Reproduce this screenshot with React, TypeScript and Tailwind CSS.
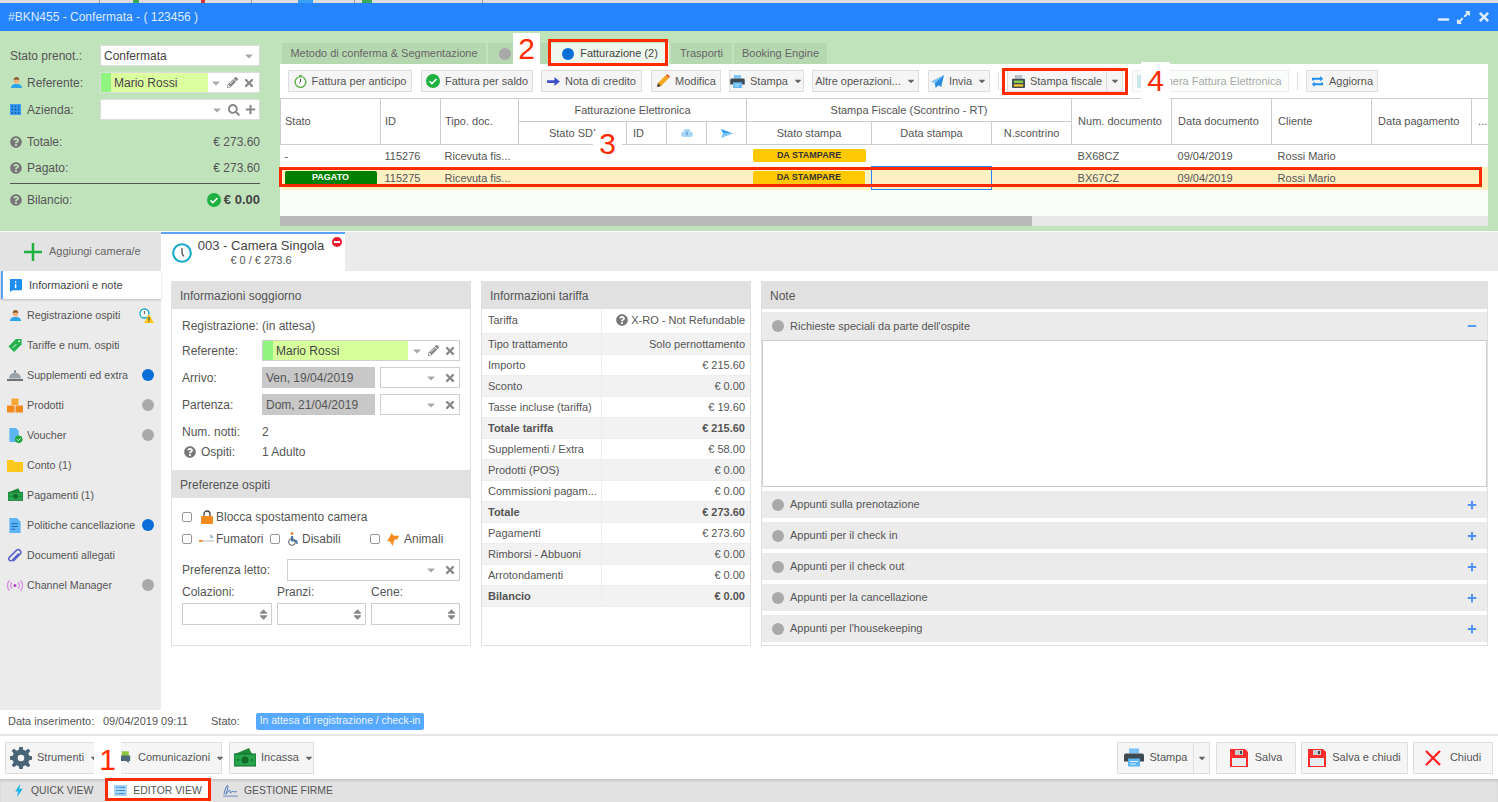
import type { ReactNode } from "react";
import { FaCaretDown, FaExpandAlt, FaMinus, FaPencilAlt, FaPlus, FaQuestionCircle, FaSearch, FaSort, FaTimes } from "react-icons/fa";

const Help = () => <FaQuestionCircle className="w-[12px] h-[12px] text-[#777] shrink-0" />;
const Dot = ({ color }: { color: "blue" | "gray" }) => (
  <span className={color === "blue" ? "block w-[12px] h-[12px] rounded-full bg-[#0a6ed8] shrink-0" : "block w-[12px] h-[12px] rounded-full bg-[#a9a9a9] shrink-0"} />
);
const Caret = () => <FaCaretDown className="w-[10px] h-[10px] text-[#666] shrink-0" />;
const FieldCaret = () => <FaCaretDown className="w-[12px] h-[12px] text-[#aaa] shrink-0" />;
const FieldX = () => <FaTimes className="w-[12px] h-[12px] text-[#888] shrink-0" />;
const FieldPen = () => <FaPencilAlt className="w-[11px] h-[11px] text-[#888] shrink-0" />;

function PersonIcon() {
  return (
    <svg viewBox="0 0 14 14" className="w-[13px] h-[13px] shrink-0">
      <path d="M1 13c0-3 2-4 4-4.500h4c2 .5 4 1.500 4 4.500z" fill="#2ba5e8" />
      <circle cx="7" cy="5" r="3" fill="#f0b27a" />
      <path d="M4 4.500C4 2 5.500 1 7 1s3 1 3 3.500C8.500 3.500 6 3.500 4 4.500z" fill="#8a5a2b" />
    </svg>
  );
}
function GridIcon() {
  return (
    <svg viewBox="0 0 12 12" className="w-[11px] h-[11px] shrink-0">
      <rect width="12" height="12" fill="#3aa0f5" />
      <path d="M1.500 1.500h2v2h-2zM5 1.500h2v2H5zM8.500 1.500h2v2h-2zM1.500 5h2v2h-2zM5 5h2v2H5zM8.500 5h2v2h-2zM1.500 8.500h2v2h-2zM5 8.500h2v2H5zM8.500 8.500h2v2h-2z" fill="#155fa8" />
    </svg>
  );
}
function CheckCircle() {
  return (
    <svg viewBox="0 0 14 14" className="w-[14px] h-[14px] shrink-0">
      <circle cx="7" cy="7" r="7" fill="#1fb141" />
      <path d="M3.500 7.300l2.400 2.300 4.600-4.700" fill="none" stroke="#fff" strokeWidth="1.500" />
    </svg>
  );
}
function PrinterIcon({ big }: { big?: boolean }) {
  return (
    <svg viewBox="0 0 20 18" className={big ? "w-[20px] h-[19px] shrink-0" : "w-[15px] h-[13px] shrink-0"}>
      <rect x="5" y="0" width="10" height="5" fill="#7cc4f7" />
      <path d="M2 5h16a2 2 0 0 1 2 2v6h-4v-2H4v2H0V7a2 2 0 0 1 2-2z" fill="#3f4a52" />
      <rect x="4" y="10" width="12" height="8" fill="#5db5f5" />
      <path d="M6 13h8M6 15.500h6" stroke="#fff" strokeWidth="0.800" />
    </svg>
  );
}
function FiscalIcon() {
  return (
    <svg viewBox="0 0 14 14" className="w-[13px] h-[13px] shrink-0">
      <rect x="3" y="0" width="8" height="4" fill="#b9c2c8" />
      <rect x="0" y="4" width="14" height="10" rx="1" fill="#3f4a52" />
      <rect x="2" y="6" width="10" height="2.500" fill="#8fd14f" />
      <rect x="2" y="10" width="10" height="2.500" fill="#f4c430" />
    </svg>
  );
}
function FloppyIcon() {
  return (
    <svg viewBox="0 0 18 18" className="w-[18px] h-[18px] shrink-0">
      <path d="M0 0h15l3 3v15H0z" fill="#ff2b2b" />
      <rect x="5" y="1" width="8" height="5" fill="#c9ced3" />
      <rect x="10" y="2" width="2" height="3" fill="#444" />
      <rect x="2" y="9" width="14" height="8" fill="#e6edf3" />
    </svg>
  );
}
function CashIcon({ size }: { size: "sm" | "lg" }) {
  return (
    <svg viewBox="0 0 22 20" className={size === "sm" ? "w-[15px] h-[14px] shrink-0" : "w-[22px] h-[20px] shrink-0"}>
      <path d="M1 6L15 0l3 6z" fill="#1f8a3a" />
      <rect x="0" y="6" width="22" height="12" fill="#26a44b" stroke="#0f6a2a" strokeWidth="1" />
      <ellipse cx="11" cy="12" rx="3.500" ry="3.500" fill="#0f6a2a" />
      <circle cx="4" cy="12" r="1" fill="#0f6a2a" />
      <circle cx="18" cy="12" r="1" fill="#0f6a2a" />
    </svg>
  );
}

function SideIcon({ name }: { name: string }) {
  const cls = "w-[16px] h-[15px] shrink-0";
  if (name === "person") return <PersonIcon />;
  if (name === "tag")
    return (
      <svg viewBox="0 0 16 16" className={cls}>
        <path d="M9 1h6v6l-8 8-6-6z" fill="#22b14c" />
        <circle cx="12.500" cy="3.500" r="1" fill="#fff" />
        <path d="M5.500 10.500l4-4" stroke="#fff" strokeWidth="1" />
      </svg>
    );
  if (name === "bell")
    return (
      <svg viewBox="0 0 16 14" className={cls}>
        <path d="M2 10a6 6 0 0 1 12 0z" fill="#9aa3aa" />
        <rect x="7" y="2" width="2" height="2" fill="#6d757b" />
        <rect x="0" y="10.500" width="16" height="2" fill="#6d757b" />
      </svg>
    );
  if (name === "boxes")
    return (
      <svg viewBox="0 0 16 14" className={cls}>
        <rect x="4.500" y="0" width="7" height="6.500" fill="#f7a733" />
        <rect x="0" y="7" width="7.500" height="7" fill="#f58a1f" />
        <rect x="8.500" y="7" width="7.500" height="7" fill="#f58a1f" />
      </svg>
    );
  if (name === "voucher")
    return (
      <svg viewBox="0 0 16 16" className={cls}>
        <path d="M2 0h7l3 3v12H2z" fill="#5db5f5" />
        <circle cx="12" cy="12" r="4" fill="#1fa83f" />
        <path d="M10 12l1.500 1.500L14 11" stroke="#fff" fill="none" strokeWidth="1" />
      </svg>
    );
  if (name === "folder")
    return (
      <svg viewBox="0 0 16 13" className={cls}>
        <path d="M0 1h6l2 2h8v10H0z" fill="#ffc81e" />
      </svg>
    );
  if (name === "cash") return <CashIcon size="sm" />;
  if (name === "doc")
    return (
      <svg viewBox="0 0 14 16" className={cls}>
        <path d="M1 0h8l4 4v12H1z" fill="#5db5f5" />
        <path d="M3 6h7M3 9h7M3 12h4" stroke="#1566b5" strokeWidth="1" />
      </svg>
    );
  if (name === "clip")
    return (
      <svg viewBox="0 0 16 16" className={cls}>
        <path d="M13 5l-7 7a2 2 0 0 1-3-3l8-8a3 3 0 0 1 4 4l-8 8" transform="translate(-1 1)" fill="none" stroke="#5560c8" strokeWidth="1.600" />
      </svg>
    );
  return (
    <svg viewBox="0 0 16 14" className={cls}>
      <circle cx="8" cy="7" r="1.500" fill="#b23fc4" />
      <path d="M5 4a4 4 0 0 0 0 6M11 4a4 4 0 0 1 0 6M2.500 2a7 7 0 0 0 0 10M13.500 2a7 7 0 0 1 0 10" fill="none" stroke="#d58ae0" strokeWidth="1.200" />
    </svg>
  );
}

const sideItems = [
  { icon: "person", label: "Registrazione ospiti", mark: "warn" },
  { icon: "tag", label: "Tariffe e num. ospiti" },
  { icon: "bell", label: "Supplementi ed extra", mark: "blue" },
  { icon: "boxes", label: "Prodotti", mark: "gray" },
  { icon: "voucher", label: "Voucher", mark: "gray" },
  { icon: "folder", label: "Conto (1)" },
  { icon: "cash", label: "Pagamenti (1)" },
  { icon: "doc", label: "Politiche cancellazione", mark: "blue" },
  { icon: "clip", label: "Documenti allegati" },
  { icon: "radio", label: "Channel Manager", mark: "gray" },
];

const tariffRows = [
  { l: "Tipo trattamento", v: "Solo pernottamento" },
  { l: "Importo", v: "€ 215.60" },
  { l: "Sconto", v: "€ 0.00" },
  { l: "Tasse incluse (tariffa)", v: "€ 19.60" },
  { l: "Totale tariffa", v: "€ 215.60", b: true },
  { l: "Supplementi / Extra", v: "€ 58.00" },
  { l: "Prodotti (POS)", v: "€ 0.00" },
  { l: "Commissioni pagam...", v: "€ 0.00" },
  { l: "Totale", v: "€ 273.60", b: true },
  { l: "Pagamenti", v: "€ 273.60" },
  { l: "Rimborsi - Abbuoni", v: "€ 0.00" },
  { l: "Arrotondamenti", v: "€ 0.00" },
  { l: "Bilancio", v: "€ 0.00", b: true },
];

const noteRows = ["Appunti sulla prenotazione", "Appunti per il check in", "Appunti per il check out", "Appunti per la cancellazione", "Appunti per l'housekeeping"];

function ToolBtn({ className, children }: { className: string; children: ReactNode }) {
  return <div className={`h-[22px] flex items-center justify-center gap-[5px] bg-[#f5f5f5] border border-[#dddddd] shrink-0 whitespace-nowrap ${className}`}>{children}</div>;
}

function BigBtn({ className, children }: { className: string; children: ReactNode }) {
  return <div className={`h-[32px] flex items-center justify-center gap-[6px] bg-[#f5f5f5] border border-[#dedede] shrink-0 whitespace-nowrap ${className}`}>{children}</div>;
}

function PanelTitle({ children }: { children: ReactNode }) {
  return <div className="h-[28px] flex items-center px-[8px] pt-[2px] bg-[#e1e1e1] text-[12px] text-[#555] shrink-0">{children}</div>;
}

function Check() {
  return <span className="block w-[10px] h-[10px] rounded-[2px] border border-[#999] bg-white shrink-0" />;
}

function Spin({ className }: { className: string }) {
  return (
    <div className={`h-[22px] border border-[#cfcfcf] flex items-center justify-end pr-[3px] ${className}`}>
      <FaSort className="w-[9px] h-[13px] text-[#888]" />
    </div>
  );
}

function SmallTime() {
  return (
    <div className="w-[80px] h-[21px] ml-[5px] border border-[#cfcfcf] flex items-center justify-end gap-[7px] pr-[3px]">
      <FieldCaret />
      <FieldX />
    </div>
  );
}

const thBase = "border border-[#cccccc] font-normal text-[11px] text-[#555] text-left whitespace-nowrap";
const thL = `${thBase} px-[4px]`;
const thR = `${thBase} px-[6px]`;
const thCenter = "border border-[#cccccc] font-normal text-[11px] text-[#555] text-center whitespace-nowrap";
const tdL = "px-[4px] text-[11px] text-[#555] whitespace-nowrap overflow-hidden";
const tdR = "px-[6px] text-[11px] text-[#555] whitespace-nowrap overflow-hidden";

export default function App() {
  return (
    <div className="relative w-[1498px] h-[802px] overflow-hidden flex flex-col bg-white text-[11px] text-[#555] [font-family:'Liberation_Sans',sans-serif]">
      {/* page behind the window */}
      <div className="h-[3px] bg-[#dddddd] flex shrink-0">
        <div className="w-[100px] border-r border-[#999]" />
        <div className="w-[33px]" />
        <div className="w-[6px] bg-[#39a85a]" />
        <div className="w-[62px]" />
        <div className="w-[4px] bg-[#d33]" />
        <div className="w-[47px] border-r border-[#999]" />
        <div className="w-[46px]" />
        <div className="w-[15px] bg-[#3aa0f5]" />
        <div className="w-[42px] border-r border-[#999]" />
        <div className="w-[7px]" />
        <div className="w-[10px] bg-[#39a85a]" />
        <div className="w-[111px] border-r border-[#999]" />
      </div>

      {/* title bar */}
      <div className="h-[28px] bg-[#2684ff] flex items-center justify-between pl-[8px] pr-[7px] shrink-0">
        <span className="text-[12px] text-[#dcebff]">#BKN455 - Confermata - ( 123456 )</span>
        <div className="flex items-center gap-[6px] text-[#dcebff]">
          <FaMinus className="w-[13px] h-[13px] mt-[4px]" />
          <FaExpandAlt className="w-[15px] h-[15px]" />
          <FaTimes className="w-[14px] h-[14px]" />
        </div>
      </div>

      {/* booking summary */}
      <div className="h-[200px] bg-[#c1e3bc] flex shrink-0">
        <div className="w-[250px] ml-[10px] mt-[14px] text-[12px] shrink-0">
          <div className="flex items-center h-[21px]">
            <span className="w-[90px] shrink-0">Stato prenot.:</span>
            <div className="w-[160px] h-[21px] bg-white border border-[#dddddd] flex items-center justify-between pl-[3px] pr-[4px] text-[#444]">
              Confermata
              <FieldCaret />
            </div>
          </div>
          <div className="flex items-center h-[21px] mt-[6px]">
            <div className="w-[90px] flex items-center gap-[4px] shrink-0">
              <PersonIcon />
              Referente:
            </div>
            <div className="w-[160px] h-[21px] bg-white border border-[#dddddd] flex items-center">
              <span className="w-[10px] h-full bg-[#90f57e]" />
              <span className="w-[97px] h-full bg-[#dcff9f] flex items-center pl-[3px] text-[#444]">Mario Rossi</span>
              <div className="flex items-center gap-[5px] pl-[2px]">
                <FieldCaret />
                <FieldPen />
                <FieldX />
              </div>
            </div>
          </div>
          <div className="flex items-center h-[21px] mt-[6px]">
            <div className="w-[90px] flex items-center gap-[6px] shrink-0">
              <GridIcon />
              Azienda:
            </div>
            <div className="w-[160px] h-[21px] bg-white border border-[#dddddd] flex items-center justify-end gap-[5px] pr-[3px]">
              <FieldCaret />
              <FaSearch className="w-[12px] h-[12px] text-[#888]" />
              <FaPlus className="w-[11px] h-[11px] text-[#888]" />
            </div>
          </div>
          <div className="flex items-center justify-between mt-[12px] h-[20px]">
            <div className="flex items-center gap-[5px]">
              <Help />
              Totale:
            </div>
            € 273.60
          </div>
          <div className="flex items-center justify-between mt-[6px] h-[20px] pb-0">
            <div className="flex items-center gap-[5px]">
              <Help />
              Pagato:
            </div>
            € 273.60
          </div>
          <div className="h-px bg-[#555] mt-[5px]" />
          <div className="flex items-center justify-between mt-[6px] h-[20px]">
            <div className="flex items-center gap-[5px]">
              <Help />
              Bilancio:
            </div>
            <div className="flex items-center gap-[3px] font-bold text-[#444] text-[13px]">
              <CheckCircle />
              € 0.00
            </div>
          </div>
        </div>

        <div className="ml-[20px] w-[1208px] flex flex-col shrink-0">
          <div className="h-[33px] pt-[12px] flex items-stretch gap-[2px] pl-[2px] shrink-0 text-[#666]">
            <div className="w-[204px] bg-[#b6d8b1] flex items-center justify-center">Metodo di conferma &amp; Segmentazione</div>
            <div className="w-[61px] bg-[#b6d8b1] flex items-center pl-[11px]">
              <Dot color="gray" />
            </div>
            <div className="w-[118px] bg-[#eef7ec] flex items-center justify-center gap-[6px] text-[#444]">
              <Dot color="blue" />
              Fatturazione (2)
            </div>
            <div className="w-[61px] bg-[#b6d8b1] flex items-center justify-center">Trasporti</div>
            <div className="w-[93px] bg-[#b6d8b1] flex items-center justify-center">Booking Engine</div>
          </div>
          <div className="h-[162px] bg-white flex flex-col shrink-0">
            <div className="h-[34px] flex items-center pl-[8px] shrink-0">
              <ToolBtn className="w-[124px]">
                <svg viewBox="0 0 14 14" className="w-[13px] h-[13px] shrink-0">
                  <circle cx="7" cy="7.500" r="5.800" fill="#fff" stroke="#5bb04a" strokeWidth="1.500" />
                  <path d="M7 4v3.500l-1.500 1.500" fill="none" stroke="#444" strokeWidth="1" />
                  <rect x="5.500" y="0" width="3" height="1.500" fill="#5bb04a" />
                </svg>
                Fattura per anticipo
              </ToolBtn>
              <ToolBtn className="w-[112px] ml-[9px]">
                <CheckCircle />
                Fattura per saldo
              </ToolBtn>
              <ToolBtn className="w-[101px] ml-[8px]">
                <svg viewBox="0 0 14 12" className="w-[13px] h-[11px] shrink-0">
                  <path d="M0 4.500h8V1l6 5-6 5V7.500H0z" fill="#4052c8" />
                </svg>
                Nota di credito
              </ToolBtn>
              <ToolBtn className="w-[70px] ml-[9px]">
                <svg viewBox="0 0 14 14" className="w-[14px] h-[14px] shrink-0">
                  <path d="M1 13l1-4 8-8 3 3-8 8z" fill="#f5a623" />
                  <path d="M10 1l3 3 1-1.500L11.500 0z" fill="#e0562b" />
                  <path d="M1 13l1-4 3 3z" fill="#444" />
                </svg>
                Modifica
              </ToolBtn>
              <ToolBtn className="w-[75px] ml-[8px]">
                <PrinterIcon />
                Stampa
                <Caret />
              </ToolBtn>
              <ToolBtn className="w-[107px] ml-[8px]">
                Altre operazioni...
                <Caret />
              </ToolBtn>
              <ToolBtn className="w-[62px] ml-[9px]">
                <svg viewBox="0 0 14 14" className="w-[13px] h-[13px] shrink-0">
                  <path d="M14 0L0 7l4 2z" fill="#7cc4f7" />
                  <path d="M14 0L4 9l1 5 3-3 3 2z" fill="#2c8ee0" />
                </svg>
                Invia
                <Caret />
              </ToolBtn>
              <div className="w-px h-[18px] bg-[#dddddd] ml-[8px]" />
              <ToolBtn className="w-[116px] ml-[8px] !justify-start !gap-0">
                <span className="w-[98px] flex items-center justify-center gap-[5px] h-full">
                  <FiscalIcon />
                  Stampa fiscale
                </span>
                <span className="flex-1 h-full border-l border-[#dddddd] flex items-center justify-center">
                  <Caret />
                </span>
              </ToolBtn>
              <div className="w-[157px] h-[22px] ml-[9px] flex items-center pl-[4px] gap-[5px] bg-[#fbfdfb] border border-[#eeeeee] text-[#aaa] whitespace-nowrap">
                <span className="w-[10px] h-[13px] bg-[#cde6ea] shrink-0" />
                <span>Genera Fattura Elettronica</span>
              </div>
              <div className="w-px h-[18px] bg-[#dddddd] ml-[8px]" />
              <ToolBtn className="w-[72px] ml-[8px]">
                <svg viewBox="0 0 14 14" className="w-[13px] h-[13px] shrink-0">
                  <path d="M1 6V3h9V1l3 3-3 3V5H3v1zM13 8v3H4v2l-3-3 3-3v2h7V8z" fill="#1f8ef1" />
                </svg>
                Aggiorna
              </ToolBtn>
            </div>

            <div className="h-[118px] bg-[#fafcf8] overflow-hidden shrink-0">
              <table className="table-fixed w-[1208px] border-collapse">
                <colgroup>
                  <col className="w-[100px]" />
                  <col className="w-[60px]" />
                  <col className="w-[78px]" />
                  <col className="w-[108px]" />
                  <col className="w-[40px]" />
                  <col className="w-[40px]" />
                  <col className="w-[40px]" />
                  <col className="w-[125px]" />
                  <col className="w-[120px]" />
                  <col className="w-[80px]" />
                  <col className="w-[100px]" />
                  <col className="w-[100px]" />
                  <col className="w-[100px]" />
                  <col className="w-[100px]" />
                  <col className="w-[17px]" />
                </colgroup>
                <thead className="bg-white">
                  <tr className="h-[23px]">
                    <th rowSpan={2} className={thL}>Stato</th>
                    <th rowSpan={2} className={thL}>ID</th>
                    <th rowSpan={2} className={thL}>Tipo. doc.</th>
                    <th colSpan={4} className={thCenter}>Fatturazione Elettronica</th>
                    <th colSpan={3} className={thCenter}>Stampa Fiscale (Scontrino - RT)</th>
                    <th rowSpan={2} className={thR}>Num. documento</th>
                    <th rowSpan={2} className={thR}>Data documento</th>
                    <th rowSpan={2} className={thR}>Cliente</th>
                    <th rowSpan={2} className={thR}>Data pagamento</th>
                    <th rowSpan={2} className={thR}>...</th>
                  </tr>
                  <tr className="h-[23px]">
                    <th className={thCenter}>Stato SDI</th>
                    <th className={thR}>ID</th>
                    <th className={thCenter}>
                      <svg viewBox="0 0 14 10" className="w-[12px] h-[9px] mx-auto">
                        <path d="M3 9a3 3 0 0 1 0-6 4 4 0 0 1 8 0 3 3 0 0 1 0 6z" fill="#a9d6f7" />
                        <path d="M7 3v4" stroke="#3b6fc4" strokeWidth="1" />
                      </svg>
                    </th>
                    <th className={thCenter}>
                      <svg viewBox="0 0 12 9" className="w-[12px] h-[9px] mx-auto">
                        <path d="M0 0l12 4.500H2z" fill="#2c9cf0" />
                        <path d="M0 9l12-4.500H2z" fill="#7cc4f7" />
                      </svg>
                    </th>
                    <th className={thCenter}>Stato stampa</th>
                    <th className={thCenter}>Data stampa</th>
                    <th className={thCenter}>N.scontrino</th>
                  </tr>
                </thead>
                <tbody>
                  <tr className="h-[22px] bg-white">
                    <td className={tdL}>-</td>
                    <td className={tdL}>115276</td>
                    <td className={tdL}>Ricevuta fis...</td>
                    <td colSpan={4} />
                    <td className="px-[6px]">
                      <div className="h-[13px] rounded-[2px] bg-[#ffc800] text-[9px] font-bold text-[#333] flex items-center justify-center">DA STAMPARE</div>
                    </td>
                    <td colSpan={2} />
                    <td className={tdR}>BX68CZ</td>
                    <td className={tdR}>09/04/2019</td>
                    <td className={tdR}>Rossi Mario</td>
                    <td colSpan={2} />
                  </tr>
                  <tr className="h-[23px] bg-[#fdf1c4]">
                    <td className="px-[4px]">
                      <div className="h-[14px] rounded-[2px] bg-[#008000] text-[9px] font-bold text-white flex items-center justify-center">PAGATO</div>
                    </td>
                    <td className={tdL}>115275</td>
                    <td className={tdL}>Ricevuta fis...</td>
                    <td colSpan={4} />
                    <td className="px-[6px]">
                      <div className="h-[14px] rounded-[2px] bg-[#ffc800] text-[9px] font-bold text-[#333] flex items-center justify-center">DA STAMPARE</div>
                    </td>
                    <td className="border border-[#2684ff]" />
                    <td />
                    <td className={tdR}>BX67CZ</td>
                    <td className={tdR}>09/04/2019</td>
                    <td className={tdR}>Rossi Mario</td>
                    <td colSpan={2} />
                  </tr>
                </tbody>
              </table>
            </div>
            <div className="h-[10px] bg-[#e8e8e8] shrink-0">
              <div className="w-[752px] h-full bg-[#b9b9b9]" />
            </div>
          </div>
        </div>
      </div>

      {/* room tabs */}
      <div className="h-[40px] flex pt-px shrink-0 bg-white">
        <div className="w-[161px] bg-[#e3e3e3] flex items-center pl-[24px] gap-[7px] shrink-0 text-[#666]">
          <svg viewBox="0 0 18 18" className="w-[18px] h-[18px] shrink-0">
            <path d="M9 0v18M0 9h18" stroke="#1fb141" strokeWidth="2.500" />
          </svg>
          Aggiungi camera/e
        </div>
        <div className="w-[184px] border-t-2 border-[#5ba4f5] bg-white flex relative shrink-0">
          <svg viewBox="0 0 20 20" className="w-[20px] h-[20px] ml-[11px] mt-[9px] shrink-0">
            <circle cx="10" cy="10" r="8.800" fill="#fff" stroke="#12a8c8" strokeWidth="2" />
            <path d="M10 5v5.500l2 3" fill="none" stroke="#444" strokeWidth="1.200" />
          </svg>
          <div className="w-[132px] flex flex-col items-center ml-[3px]">
            <span className="text-[13px] text-[#444] leading-[15px] mt-[4px]">003 - Camera Singola</span>
            <span className="text-[11px] text-[#555] leading-[15px]">€ 0 / € 273.6</span>
          </div>
          <span className="absolute right-[3px] top-[3px] w-[10px] h-[10px] rounded-full bg-[#ee1c2e] flex items-center justify-center">
            <span className="w-[6px] h-[2px] bg-white" />
          </span>
        </div>
        <div className="flex-1 bg-[#ebebeb]" />
      </div>

      {/* main area */}
      <div className="h-[439px] flex shrink-0">
        <div className="w-[161px] bg-[#ebebeb] shrink-0 flex flex-col text-[10.7px]">
          <div className="h-[28px] ml-[1px] bg-white border-l-2 border-[#5ba4f5] shadow-[0_1px_2px_rgba(0,0,0,0.2)] flex items-center pl-[6px] gap-[7px] text-[#444] text-[11px]">
            <svg viewBox="0 0 14 14" className="w-[13px] h-[13px] shrink-0">
              <path d="M1 0h12a1 1 0 0 1 1 1v10a1 1 0 0 1-1 1H4l-3 2z" fill="#1f8ef1" />
              <rect x="6.300" y="2.500" width="1.600" height="1.600" fill="#fff" />
              <rect x="6.300" y="5.300" width="1.600" height="4.500" fill="#fff" />
            </svg>
            Informazioni e note
          </div>
          <div className="h-px" />
          {sideItems.map((item) => (
            <div key={item.label} className="h-[30px] flex items-center pl-[7px] pr-[7px]">
              <span className="w-[16px] flex justify-center shrink-0">
                <SideIcon name={item.icon} />
              </span>
              <span className="ml-[4px] flex-1 whitespace-nowrap">{item.label}</span>
              {item.mark === "blue" && <Dot color="blue" />}
              {item.mark === "gray" && <Dot color="gray" />}
              {item.mark === "warn" && (
                <svg viewBox="0 0 15 15" className="w-[15px] h-[15px] shrink-0">
                  <circle cx="5.500" cy="5.500" r="4.500" fill="#fff" stroke="#12a8c8" strokeWidth="1.300" />
                  <path d="M5.500 3v3" stroke="#444" strokeWidth="0.800" />
                  <path d="M10 6l5 9H5z" fill="#ffc81e" />
                  <path d="M10 9v3.500M10 13.200v1" stroke="#333" strokeWidth="1" />
                </svg>
              )}
            </div>
          ))}
        </div>

        <div className="flex-1 flex gap-[10px] pl-[10px] pt-[10px]">
          {/* stay info */}
          <div className="w-[300px] h-[365px] border border-[#e1e1e1] border-t-0 flex flex-col shrink-0 text-[12px]">
            <PanelTitle>Informazioni soggiorno</PanelTitle>
            <div className="h-[161px] pl-[10px] pr-[10px] pt-[7px] shrink-0">
              <div className="flex items-center h-[20px]">
                <span className="w-[80px] shrink-0">Registrazione:</span>
                (in attesa)
              </div>
              <div className="flex items-center h-[21px] mt-[4px]">
                <span className="w-[80px] shrink-0">Referente:</span>
                <div className="w-[198px] h-[21px] border border-[#cfcfcf] flex items-center">
                  <span className="w-[10px] h-full bg-[#90f57e]" />
                  <span className="w-[135px] h-full bg-[#d7ff9c] flex items-center pl-[3px] text-[#444]">Mario Rossi</span>
                  <div className="flex items-center gap-[5px] pl-[3px]">
                    <FieldCaret />
                    <FieldPen />
                    <FieldX />
                  </div>
                </div>
              </div>
              <div className="flex items-center h-[21px] mt-[6px]">
                <span className="w-[80px] shrink-0">Arrivo:</span>
                <div className="w-[113px] h-[21px] bg-[#c8c8c8] flex items-center pl-[4px]">Ven, 19/04/2019</div>
                <SmallTime />
              </div>
              <div className="flex items-center h-[21px] mt-[6px]">
                <span className="w-[80px] shrink-0">Partenza:</span>
                <div className="w-[113px] h-[21px] bg-[#c8c8c8] flex items-center pl-[4px]">Dom, 21/04/2019</div>
                <SmallTime />
              </div>
              <div className="flex items-center h-[20px] mt-[7px]">
                <span className="w-[80px] shrink-0">Num. notti:</span>
                2
              </div>
              <div className="flex items-center h-[20px]">
                <span className="w-[80px] flex items-center gap-[5px] pl-[2px] shrink-0">
                  <Help />
                  Ospiti:
                </span>
                1 Adulto
              </div>
            </div>
            <PanelTitle>Preferenze ospiti</PanelTitle>
            <div className="pl-[10px] pr-[10px] pt-[9px]">
              <div className="flex items-center h-[20px]">
                <Check />
                <svg viewBox="0 0 12 14" className="w-[12px] h-[14px] ml-[9px] shrink-0">
                  <rect x="0" y="6" width="12" height="8" rx="1" fill="#f58a1f" />
                  <path d="M3 6V4a3 3 0 0 1 6 0v2" fill="none" stroke="#444" strokeWidth="1.300" />
                </svg>
                <span className="ml-[3px]">Blocca spostamento camera</span>
              </div>
              <div className="flex items-center h-[20px] mt-[2px]">
                <Check />
                <svg viewBox="0 0 16 10" className="w-[15px] h-[10px] ml-[7px] shrink-0">
                  <rect x="0" y="6" width="4" height="2" fill="#f58a1f" />
                  <rect x="4" y="6" width="12" height="2" fill="#d8d8d8" />
                  <path d="M12 0c2 1 3 2 3 4h-3z" fill="#9bb6c8" />
                </svg>
                <span className="ml-[2px] w-[52px]">Fumatori</span>
                <span className="ml-[2px]"><Check /></span>
                <svg viewBox="0 0 12 14" className="w-[12px] h-[14px] ml-[7px] shrink-0">
                  <circle cx="5" cy="1.500" r="1.500" fill="#e08a3c" />
                  <path d="M4 4h2v4h4l1 4h-1.500l-1-2.500H4z" fill="#3f7fc4" />
                  <circle cx="5" cy="10" r="3.400" fill="none" stroke="#555" strokeWidth="1" />
                </svg>
                <span className="ml-[3px] w-[64px]">Disabili</span>
                <span className="ml-[4px]"><Check /></span>
                <svg viewBox="0 0 14 14" className="w-[13px] h-[13px] ml-[7px] shrink-0">
                  <path d="M5 0l2 3h6l-2 4H8l-2 7-3-5H0l3-5z" fill="#f58a1f" />
                </svg>
                <span className="ml-[4px]">Animali</span>
              </div>
              <div className="flex items-center justify-between h-[22px] mt-[10px]">
                <span>Preferenza letto:</span>
                <div className="w-[173px] h-[22px] border border-[#cfcfcf] flex items-center justify-end gap-[7px] pr-[3px]">
                  <FieldCaret />
                  <FieldX />
                </div>
              </div>
              <div className="flex h-[22px] items-center">
                <span className="w-[95px]">Colazioni:</span>
                <span className="w-[94px]">Pranzi:</span>
                <span>Cene:</span>
              </div>
              <div className="flex gap-[5px]">
                <Spin className="w-[90px]" />
                <Spin className="w-[89px]" />
                <Spin className="w-[89px]" />
              </div>
            </div>
          </div>

          {/* rate info */}
          <div className="w-[270px] h-[365px] border border-[#e1e1e1] border-t-0 flex flex-col shrink-0">
            <PanelTitle>Informazioni tariffa</PanelTitle>
            <div className="h-[25px] flex items-center border-b border-[#eeeeee] shrink-0">
              <span className="w-[120px] h-full pl-[6px] pb-[2px] flex items-center border-r border-[#eeeeee] shrink-0">Tariffa</span>
              <span className="flex-1 flex items-center justify-end gap-[3px] pr-[5px] pb-[2px]">
                <Help />
                X-RO - Not Refundable
              </span>
            </div>
            {tariffRows.map((row, i) => (
              <div key={row.l} className={i % 2 === 0 ? "h-[21px] flex items-center bg-[#f2f2f2] border-b border-[#eeeeee] shrink-0" : "h-[21px] flex items-center border-b border-[#eeeeee] shrink-0"}>
                <span className={row.b ? "w-[120px] h-full pl-[6px] flex items-center border-r border-[#eeeeee] font-bold whitespace-nowrap shrink-0" : "w-[120px] h-full pl-[6px] flex items-center border-r border-[#eeeeee] whitespace-nowrap shrink-0"}>{row.l}</span>
                <span className={row.b ? "flex-1 text-right pr-[5px] font-bold" : "flex-1 text-right pr-[5px]"}>{row.v}</span>
              </div>
            ))}
          </div>

          {/* notes */}
          <div className="w-[727px] h-[365px] border border-[#e1e1e1] border-t-0 border-l-[1px] flex flex-col shrink-0">
            <PanelTitle>Note</PanelTitle>
            <div className="h-[28px] mt-[3px] bg-[#ebebeb] flex items-center pl-[10px] pr-[10px] gap-[6px] shrink-0">
              <Dot color="gray" />
              <span className="flex-1">Richieste speciali da parte dell'ospite</span>
              <FaMinus className="w-[10px] h-[10px] text-[#5b9cf5]" />
            </div>
            <div className="h-[147px] bg-white border border-[#cccccc] shrink-0" />
            {noteRows.map((label) => (
              <div key={label} className="h-[27px] mt-[4px] bg-[#ebebeb] flex items-center pl-[10px] pr-[10px] gap-[6px] shrink-0">
                <Dot color="gray" />
                <span className="flex-1">{label}</span>
                <FaPlus className="w-[10px] h-[10px] text-[#4a90f5]" />
              </div>
            ))}
          </div>
        </div>
      </div>

      {/* status line */}
      <div className="h-[26px] flex items-center pl-[8px] border-b-2 border-[#e5e5e5] shrink-0 pb-[2px]">
        <span className="w-[86px] whitespace-nowrap">Data inserimento:</span>
        <span className="ml-[9px] w-[87px] whitespace-nowrap">09/04/2019 09:11</span>
        <span className="ml-[21px] w-[29px]">Stato:</span>
        <span className="ml-[16px] h-[17px] w-[168px] rounded-[2px] bg-[#57a9ff] text-[10.4px] text-[#eaf4ff] flex items-center justify-center whitespace-nowrap">In attesa di registrazione / check-in</span>
      </div>

      {/* action bar */}
      <div className="h-[43px] flex items-center justify-between pl-[5px] pr-[5px] shrink-0">
        <div className="flex items-center">
          <BigBtn className="w-[107px] !justify-start pl-[4px] !gap-[5px]">
            <svg viewBox="0 0 20 20" className="w-[22px] h-[22px] shrink-0">
              <path d="M8.500 0h3l.5 3 2 .8 2.500-1.800 2 2-1.800 2.500.8 2 3 .5v3l-3 .5-.8 2 1.800 2.500-2 2-2.500-1.800-2 .8-.5 3h-3l-.5-3-2-.8-2.500 1.800-2-2 1.800-2.500-.8-2-3-.5v-3l3-.5.8-2L1.500 4l2-2L6 3.800l2-.8z" fill="#4a6478" transform="translate(0 -0.500)" />
              <circle cx="10" cy="10" r="3" fill="#f5f5f5" />
            </svg>
            Strumenti
            <Caret />
          </BigBtn>
          <BigBtn className="w-[110px] !justify-start pl-[6px] !gap-[5px]">
            <svg viewBox="0 0 20 18" className="w-[14px] h-[17px] shrink-0">
              <path d="M4 0h10v8H8l-4 3z" fill="#8cc63f" />
              <path d="M2 6h14v8h-2v3l-4-3H2z" fill="#4f6a7a" />
            </svg>
            Comunicazioni
            <Caret />
          </BigBtn>
          <BigBtn className="w-[85px] ml-[7px] !justify-start pl-[4px] !gap-[5px]">
            <CashIcon size="lg" />
            Incassa
            <Caret />
          </BigBtn>
        </div>
        <div className="flex items-center">
          <BigBtn className="w-[93px] !justify-start !gap-0">
            <span className="w-[75px] flex items-center justify-center gap-[6px] h-full">
              <PrinterIcon big />
              Stampa
            </span>
            <span className="flex-1 h-full border-l border-[#dedede] flex items-center justify-center">
              <Caret />
            </span>
          </BigBtn>
          <BigBtn className="w-[80px] ml-[6px] !gap-[7px]">
            <FloppyIcon />
            Salva
          </BigBtn>
          <BigBtn className="w-[107px] ml-[5px]">
            <FloppyIcon />
            Salva e chiudi
          </BigBtn>
          <BigBtn className="w-[80px] ml-[5px] !gap-[9px]">
            <svg viewBox="0 0 16 16" className="w-[16px] h-[16px] shrink-0">
              <path d="M1 1l14 14M15 1L1 15" stroke="#ff2020" strokeWidth="2.200" />
            </svg>
            Chiudi
          </BigBtn>
        </div>
      </div>

      {/* view tabs */}
      <div className="h-[23px] bg-[#e2e2e2] shadow-[inset_0_2px_2px_rgba(0,0,0,0.12)] flex items-center shrink-0 text-[#555] text-[10.4px]">
        <svg viewBox="0 0 8 14" className="w-[8px] h-[13px] ml-[15px] shrink-0">
          <path d="M5 0L0 8h3l-1 6 6-9H4.500z" fill="#19b5e8" />
        </svg>
        <span className="ml-[8px] w-[63px] whitespace-nowrap">QUICK VIEW</span>
        <div className="ml-[11px] w-[106px] h-full bg-white flex items-center justify-center gap-[6px]">
          <svg viewBox="0 0 14 12" className="w-[13px] h-[11px] shrink-0">
            <rect width="14" height="12" fill="#a9d6f7" />
            <path d="M2 2.500h2M5 2.500h7M2 6h2M5 6h7M2 9.500h2M5 9.500h7" stroke="#2c7fd0" strokeWidth="1" />
          </svg>
          EDITOR VIEW
        </div>
        <svg viewBox="0 0 16 14" className="w-[15px] h-[13px] ml-[12px] shrink-0">
          <path d="M1 11C2 6 4 1 5 1.500S4 8 3 11c2-3 4-5 4.500-4S7 10 8 9.500s2-2 3-1.500 2 1 4 0" fill="none" stroke="#3d6fb5" strokeWidth="1" />
          <path d="M0 13h16" stroke="#3d6fb5" strokeWidth="0.800" />
        </svg>
        <span className="ml-[6px]">GESTIONE FIRME</span>
      </div>

      {/* help callouts laid over the screenshot */}
      <div className="absolute left-[513px] top-[33px] w-[27px] h-[32px] bg-white flex items-center justify-center text-[30px] leading-none text-[#ff2a00]">2</div>
      <div className="absolute left-[593px] top-[131px] w-[29px] h-[26px] bg-white flex items-center justify-center text-[30px] leading-none text-[#ff2a00]">3</div>
      <div className="absolute left-[1141px] top-[62px] w-[29px] h-[38px] bg-white flex items-center justify-center text-[30px] leading-none text-[#ff2a00]">4</div>
      <div className="absolute left-[94px] top-[742px] w-[27px] h-[36px] bg-white flex items-center justify-center text-[30px] leading-none text-[#ff2a00]">1</div>
      <div className="absolute left-[548px] top-[39px] w-[120px] h-[27px] border-[3px] border-[#ff2a00]" />
      <div className="absolute left-[279px] top-[167px] w-[1203px] h-[20px] border-[3px] border-[#ff2a00]" />
      <div className="absolute left-[1002px] top-[68px] w-[126px] h-[27px] border-[3px] border-[#ff2a00]" />
      <div className="absolute left-[105px] top-[778px] w-[106px] h-[23px] border-[3px] border-[#ff2a00]" />
    </div>
  );
}
